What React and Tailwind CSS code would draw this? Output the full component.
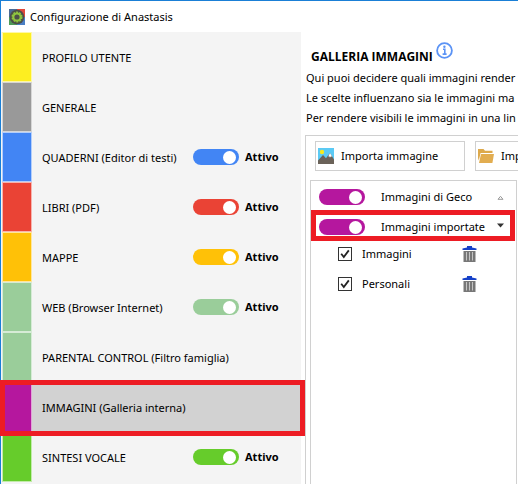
import { useState } from "react";

const SECTIONS = [
  { id: "profilo", label: "PROFILO UTENTE", swatch: "bg-[#fdee21]" },
  { id: "generale", label: "GENERALE", swatch: "bg-[#999999]" },
  { id: "quaderni", label: "QUADERNI (Editor di testi)", swatch: "bg-[#4285f4]", toggle: "bg-[#4285f4]" },
  { id: "libri", label: "LIBRI (PDF)", swatch: "bg-[#ea4335]", toggle: "bg-[#ea4335]" },
  { id: "mappe", label: "MAPPE", swatch: "bg-[#ffc107]", toggle: "bg-[#ffc107]" },
  { id: "web", label: "WEB (Browser Internet)", swatch: "bg-[#9acd9a]", toggle: "bg-[#9acd9a]" },
  { id: "parental", label: "PARENTAL CONTROL (Filtro famiglia)", swatch: "bg-[#9acd9a]" },
  { id: "immagini", label: "IMMAGINI (Galleria interna)", swatch: "bg-[#b5179e]" },
  { id: "sintesi", label: "SINTESI VOCALE", swatch: "bg-[#66cc2b]", toggle: "bg-[#66cc2b]" },
];

function Toggle({ id, color }) {
  return (
    <input
      id={id}
      type="checkbox"
      role="switch"
      defaultChecked
      className={`${color} flex h-4 w-[46px] shrink-0 cursor-pointer appearance-none items-center rounded-full px-[3px] before:size-[13px] before:rounded-full before:bg-white checked:justify-end`}
    />
  );
}

function AppIcon() {
  return (
    <svg viewBox="0 0 16 16" className="size-4 shrink-0" aria-hidden="true">
      <rect width="8" height="8" fill="#4a6b96" />
      <rect x="8" width="8" height="8" fill="#e0483b" />
      <rect y="8" width="8" height="8" fill="#4f9a58" />
      <rect x="8" y="8" width="8" height="8" fill="#4a7fc4" />
      <circle cx="8" cy="8" r="7.3" fill="#4c4f48" />
      <circle cx="8" cy="8" r="4.8" fill="none" stroke="#8fc63f" strokeWidth="1.4" strokeDasharray="2 1.02" />
      <circle cx="8" cy="8" r="3.6" fill="none" stroke="#8fc63f" strokeWidth="2" />
    </svg>
  );
}

function InfoIcon() {
  return (
    <svg viewBox="0 0 17 17" className="size-[17px]" fill="none" aria-hidden="true">
      <circle cx="8.5" cy="8.5" r="7.4" stroke="#5b93f5" strokeWidth="1.8" />
      <path d="M7 7.2h1.8v4.6M6.6 12.1h4" stroke="#5b93f5" strokeWidth="1.6" />
      <circle cx="8.4" cy="4.7" r="1.2" fill="#5b93f5" />
    </svg>
  );
}

function PictureIcon() {
  return (
    <svg viewBox="0 0 16 16" className="size-4 shrink-0" aria-hidden="true">
      <rect width="16" height="16" fill="#5bcaf5" />
      <circle cx="4" cy="4" r="2.2" fill="#f7ea1c" />
      <path d="M0 12.5 5 7l3 3.2L12 5l4 6.5V16H0z" fill="#6b6259" />
      <path d="m12 5 2.2 3.8-1.2-.5-1 1.2-1-1.4-1 .8z" fill="#fff" />
    </svg>
  );
}

function FolderIcon() {
  return (
    <svg viewBox="0 0 16 14" className="h-3.5 w-4 shrink-0" aria-hidden="true">
      <path d="M0 0h5.5L7 1.8h7.5V4H2.6L.8 11.5 0 9z" fill="#dda94b" />
      <path d="M3 5h13l-1.6 9H1z" fill="#e2ad50" />
    </svg>
  );
}

function TrashIcon() {
  return (
    <svg viewBox="0 0 15 17" className="h-[17px] w-[15px]" aria-hidden="true">
      <path d="M5 0h5v1.5l4.5 1V4H.5V2.5l4.5-1z" fill="#1540c8" />
      <path d="M1.5 5h12v11h-12z" fill="#777" />
      <path d="M4.5 6v8.5M7.5 6v8.5M10.5 6v8.5" stroke="#c4c4c4" strokeWidth="1" />
    </svg>
  );
}

function Highlight({ className }) {
  return <div className={`pointer-events-none absolute z-10 border-[5px] border-[#ed1c24] ${className}`} />;
}

function SectionRow({ section, active, onSelect }) {
  return (
    <li className={`relative flex h-[50px] items-center pl-px ${active ? "bg-[#d2d2d2]" : ""}`}>
      <span className={`h-full w-[30px] shrink-0 border border-white/60 ${section.swatch}`} />
      <button
        type="button"
        onClick={() => onSelect(section.id)}
        className={`h-full cursor-pointer pt-px pl-2.5 text-left whitespace-nowrap ${section.toggle ? "w-[161px]" : "flex-1"}`}
      >
        {section.label}
      </button>
      {section.toggle && (
        <>
          <Toggle id={`toggle-${section.id}`} color={section.toggle} />
          <label htmlFor={`toggle-${section.id}`} className="ml-1.5 font-bold">
            Attivo
          </label>
        </>
      )}
      {active && <Highlight className="-top-0.5 -right-1 -bottom-1 -left-px" />}
    </li>
  );
}

function FolderRow({ id, label }) {
  return (
    <li className="flex h-6 items-center pr-[39px] pl-[27px]">
      <input
        id={id}
        type="checkbox"
        defaultChecked
        className="peer size-3.5 shrink-0 appearance-none border border-[#333] bg-white"
      />
      <svg viewBox="0 0 14 14" className="pointer-events-none invisible -ml-3.5 size-3.5 shrink-0 peer-checked:visible" fill="none">
        <path d="M3.2 6.8 5.8 10l5-6.6" stroke="#222" strokeWidth="1.8" />
      </svg>
      <label htmlFor={id} className="ml-2.5 flex-1">
        {label}
      </label>
      <button type="button" aria-label={`Elimina ${label}`} className="cursor-pointer">
        <TrashIcon />
      </button>
    </li>
  );
}

export default function App() {
  const [active, setActive] = useState("immagini");

  return (
    <div className="flex min-h-screen flex-col border-t border-l border-[#1a7fd6] bg-white font-['Noto_Sans','Open_Sans',sans-serif] text-[11px] leading-4 text-black">
      <header className="flex h-[31px] items-center gap-[5px] pl-2">
        <AppIcon />
        <h1>Configurazione di Anastasis</h1>
      </header>

      <div className="flex flex-1">
        <nav className="w-[300px] shrink-0 bg-[#f4f4f4]">
          <ul>
            {SECTIONS.map((section) => (
              <SectionRow
                key={section.id}
                section={section}
                active={active === section.id}
                onSelect={setActive}
              />
            ))}
          </ul>
        </nav>

        <main className="flex min-w-0 flex-1 flex-col overflow-hidden pl-1 whitespace-nowrap">
          <div className="flex h-9 items-end gap-[3px] pt-2.5 pl-1.5">
            <h2 className="pb-[3px] font-['Open_Sans',sans-serif] text-xs font-bold">GALLERIA IMMAGINI</h2>
            <button type="button" aria-label="Informazioni" className="cursor-pointer self-start">
              <InfoIcon />
            </button>
          </div>
          <div className="pl-px leading-5">
            <p>Qui puoi decidere quali immagini render</p>
            <p>Le scelte influenzano sia le immagini ma</p>
            <p>Per rendere visibili le immagini in una lin</p>
          </div>

          {/* Gallery */}
          <section className="mt-[7px] flex flex-1 flex-col border-t border-l border-[#d0d0d0] pt-[5px] pl-1">
            <div className="flex gap-2.5 pl-[5px]">
              <button
                type="button"
                className="flex h-[30px] w-[150px] shrink-0 cursor-pointer items-center gap-[7px] border border-[#d0d0d0] pl-0.5"
              >
                <PictureIcon />
                Importa immagine
              </button>
              <button
                type="button"
                className="flex h-[30px] w-[150px] shrink-0 cursor-pointer items-center gap-[7px] border border-[#d0d0d0] pl-0.5"
              >
                <FolderIcon />
                Imp
              </button>
            </div>

            <div className="mt-[9px] w-[207px] flex-1 border border-b-0 border-[#d0d0d0] pt-px">
              <div className="flex h-[30px] items-center pr-3 pl-2">
                <Toggle id="geco" color="bg-[#b5179e]" />
                <label htmlFor="geco" className="ml-4 flex-1">
                  Immagini di Geco
                </label>
                <button type="button" aria-label="Espandi Immagini di Geco" className="cursor-pointer">
                  <svg viewBox="0 0 7 5" className="h-[5px] w-[7px]" fill="none">
                    <path d="m1 4.3 2.5-3 2.5 3z" stroke="#999" />
                  </svg>
                </button>
              </div>
              <div className="relative flex h-[30px] items-center pr-3 pl-2">
                <Toggle id="importate" color="bg-[#b5179e]" />
                <label htmlFor="importate" className="ml-4 flex-1">
                  Immagini importate
                </label>
                <button type="button" aria-label="Comprimi Immagini importate" className="cursor-pointer pb-1">
                  <svg viewBox="0 0 7 5" className="h-[5px] w-[7px]">
                    <path d="M0 .5h7L3.5 4.5z" fill="#333" />
                  </svg>
                </button>
                <Highlight className="-top-0.5 right-px bottom-px left-0" />
              </div>
              <ul className="space-y-1.5">
                <FolderRow id="cartella-immagini" label="Immagini" />
                <FolderRow id="cartella-personali" label="Personali" />
              </ul>
            </div>
          </section>
        </main>
      </div>
    </div>
  );
}
